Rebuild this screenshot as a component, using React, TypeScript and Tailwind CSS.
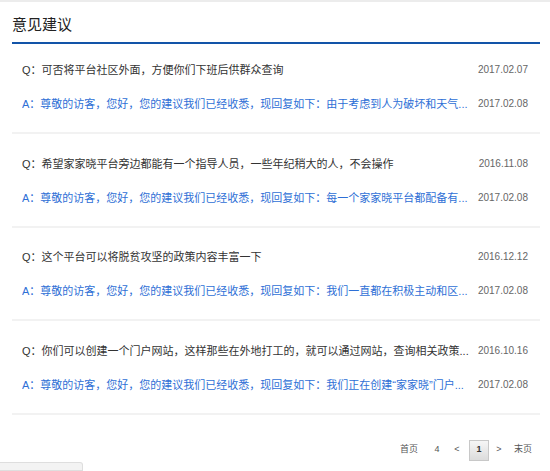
const items = [
  {
    q: "Q：可否将平台社区外面，方便你们下班后供群众查询",
    qDate: "2017.02.07",
    a: "A：尊敬的访客，您好，您的建议我们已经收悉，现回复如下：由于考虑到人为破坏和天气...",
    aDate: "2017.02.08",
  },
  {
    q: "Q：希望家家晓平台旁边都能有一个指导人员，一些年纪稍大的人，不会操作",
    qDate: "2016.11.08",
    a: "A：尊敬的访客，您好，您的建议我们已经收悉，现回复如下：每一个家家晓平台都配备有...",
    aDate: "2017.02.08",
  },
  {
    q: "Q：这个平台可以将脱贫攻坚的政策内容丰富一下",
    qDate: "2016.12.12",
    a: "A：尊敬的访客，您好，您的建议我们已经收悉，现回复如下：我们一直都在积极主动和区...",
    aDate: "2017.02.08",
  },
  {
    q: "Q：你们可以创建一个门户网站，这样那些在外地打工的，就可以通过网站，查询相关政策...",
    qDate: "2016.10.16",
    a: "A：尊敬的访客，您好，您的建议我们已经收悉，现回复如下：我们正在创建\u201C家家晓\u201D门户...",
    aDate: "2017.02.08",
  },
];

const font = { fontFamily: '"Liberation Sans", "Noto Sans CJK SC", sans-serif' };

function Line({ text, date, answer }: { text: string; date: string; answer?: boolean }) {
  return (
    <div className="flex h-[16px] items-center">
      <span
        className={`min-w-0 flex-1 overflow-hidden whitespace-nowrap text-[11px] leading-[16px] ${
          answer ? "text-[#2e6fd6]" : "text-[#333]"
        }`}
      >
        {text}
      </span>
      <span className="ml-[8px] shrink-0 text-[10px] leading-[16px] text-[#666]">{date}</span>
    </div>
  );
}

export default function App() {
  return (
    <div className="relative h-[471px] w-[550px] overflow-hidden bg-white" style={font}>
      <div className="h-[2px] bg-[#ececec]" />
      <div className="pl-[12px] pr-[10px]">
        <div className="border-b-2 border-[#1254a8] pb-[6px] pt-[11px]">
          <h1 className="text-[15px] font-normal leading-[23px] text-[#222]">意见建议</h1>
        </div>

        <ul>
          {items.map((it, i) => (
            <li
              key={i}
              className={`border-b-2 border-[#f2f2f2] pb-[20px] pl-[10px] pr-[12px] ${
                i === 0 ? "pt-[18px]" : "pt-[21.5px]"
              }`}
            >
              <Line text={it.q} date={it.qDate} />
              <div className="h-[18px]" />
              <Line text={it.a} date={it.aDate} answer />
            </li>
          ))}
        </ul>

        <div className="mt-[25px] flex items-center justify-end pr-[8px] text-[9px] text-[#555]">
          <span className="w-[18px] text-center">首页</span>
          <span className="ml-[9px] w-[20px] text-center">4</span>
          <span className="w-[20px] text-center">&lt;</span>
          <span className="ml-[2px] flex h-[21px] w-[20px] items-center justify-center border border-[#c8c8c8] bg-gradient-to-b from-[#f6f6f6] to-[#dcdcdc] font-bold text-[#333]">
            1
          </span>
          <span className="w-[20px] text-center">&gt;</span>
          <span className="ml-[5px] w-[18px] text-center">末页</span>
        </div>
      </div>

      <div className="absolute bottom-0 left-0 h-[9px] w-[83px] rounded-tr-[3px] border border-l-0 border-[#dedede] bg-[#f3f3f3]" />
    </div>
  );
}
